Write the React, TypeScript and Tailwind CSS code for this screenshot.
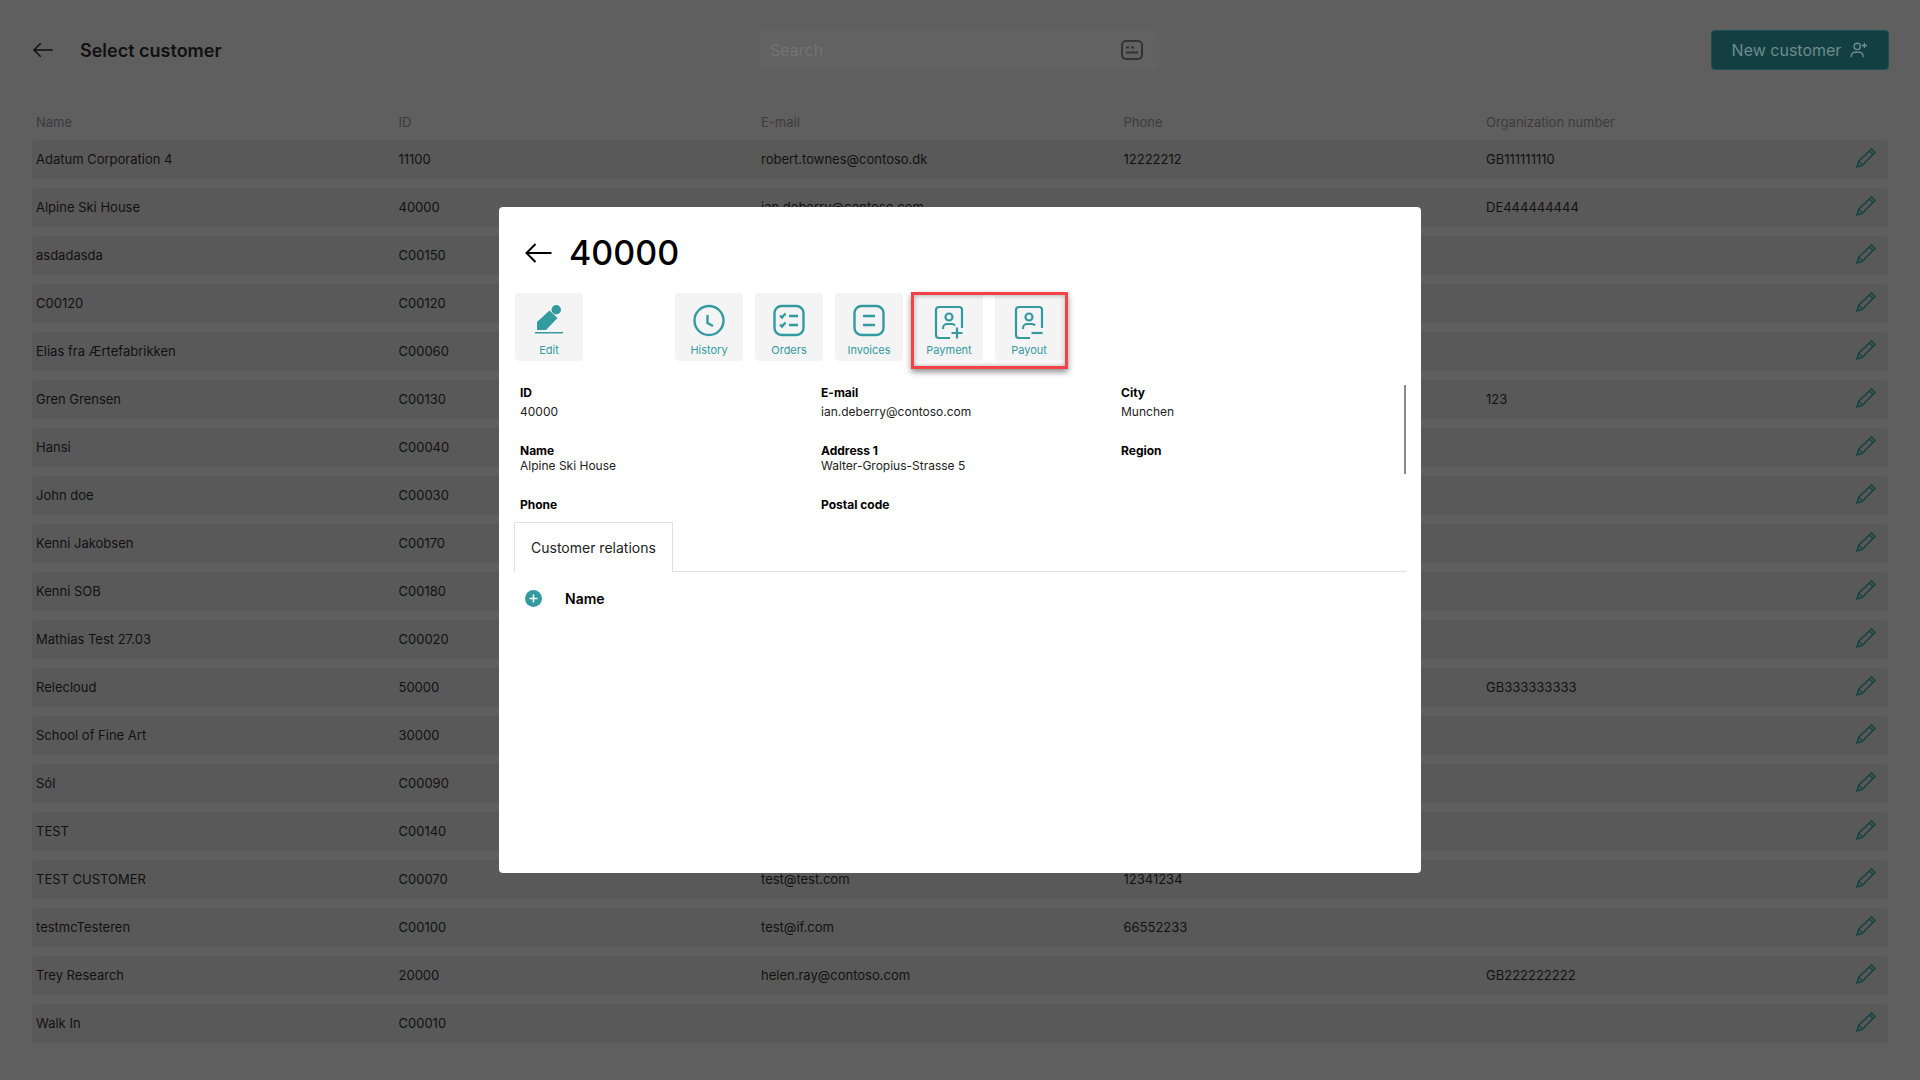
const rows = [
  ['Adatum Corporation 4', '11100', 'robert.townes@contoso.dk', '12222212', 'GB111111110'],
  ['Alpine Ski House', '40000', 'ian.deberry@contoso.com', '', 'DE444444444'],
  ['asdadasda', 'C00150', '', '', ''],
  ['C00120', 'C00120', '', '', ''],
  ['Elias fra Ærtefabrikken', 'C00060', '', '', ''],
  ['Gren Grensen', 'C00130', '', '', '123'],
  ['Hansi', 'C00040', '', '', ''],
  ['John doe', 'C00030', '', '', ''],
  ['Kenni Jakobsen', 'C00170', '', '', ''],
  ['Kenni SOB', 'C00180', '', '', ''],
  ['Mathias Test 27.03', 'C00020', '', '', ''],
  ['Relecloud', '50000', '', '', 'GB333333333'],
  ['School of Fine Art', '30000', '', '', ''],
  ['Sól', 'C00090', '', '', ''],
  ['TEST', 'C00140', '', '', ''],
  ['TEST CUSTOMER', 'C00070', 'test@test.com', '12341234', ''],
  ['testmcTesteren', 'C00100', 'test@if.com', '66552233', ''],
  ['Trey Research', '20000', 'helen.ray@contoso.com', '', 'GB222222222'],
  ['Walk In', 'C00010', '', '', ''],
];

const headers = ['Name', 'ID', 'E-mail', 'Phone', 'Organization number'];

function BackArrow({ className }: { className: string }) {
  return (
    <svg viewBox="0 0 28 24" fill="none" stroke="currentColor" strokeWidth="2" className={className}>
      <path d="M27 12H2M11 3l-9 9 9 9" />
    </svg>
  );
}

function RowPencil() {
  return (
    <svg viewBox="0 0 20 20" fill="none" stroke="#174448" strokeWidth="1.5" className="w-5 h-5">
      <path d="M1 19l1.5-5.500L15.500 1 19 4.500 6.500 17z" />
      <path d="M2.500 13.500l4 3.500M13.500 3l3.500 3.500" />
    </svg>
  );
}

function ActionIcon({ name }: { name: string }) {
  if (name === 'Edit') {
    return (
      <svg viewBox="0 0 32 32" fill="#339aa0" className="w-8 h-8">
        <path d="M4 26v-8L16.500 6.500 24.500 14 13 26z" />
        <rect x="18.500" y="1" width="9.500" height="9.500" rx="4.750" />
        <rect x="2" y="28" width="28" height="1.500" />
      </svg>
    );
  }
  if (name === 'History') {
    return (
      <svg viewBox="0 0 32 32" fill="none" stroke="#339aa0" strokeWidth="2.400" className="w-8 h-8 overflow-visible">
        <circle cx="16" cy="16.500" r="14.500" />
        <path d="M14.500 11v8l5.500 3" />
      </svg>
    );
  }
  if (name === 'Orders') {
    return (
      <svg viewBox="0 0 32 32" fill="none" stroke="#339aa0" strokeWidth="2.400" className="w-8 h-8 overflow-visible">
        <rect x="1.500" y="2" width="29" height="29" rx="7" />
        <path d="M7 11.500l2 2 3.500-4M7 20.500l2 2 3.500-4M16 12h9M16 21h9" />
      </svg>
    );
  }
  if (name === 'Invoices') {
    return (
      <svg viewBox="0 0 32 32" fill="none" stroke="#339aa0" strokeWidth="2.400" className="w-8 h-8 overflow-visible">
        <rect x="1.500" y="2" width="29" height="29" rx="7" />
        <path d="M10 12h12M10 21h12" />
      </svg>
    );
  }
  return (
    <svg viewBox="0 0 32 32" fill="none" stroke="#339aa0" strokeWidth="2.200" className="w-8 h-8 overflow-visible">
      <path d="M17 34H6a3 3 0 0 1-3-3V6a3 3 0 0 1 3-3h20a3 3 0 0 1 3 3v18" />
      <circle cx="16" cy="13" r="3.500" />
      <path d="M10 25v-1a4 4 0 0 1 4-4h5a4 4 0 0 1 3 1.500" />
      {name === 'Payment' ? <path d="M18.500 29h11M24 23.500v11" /> : <path d="M18.500 29h11" />}
    </svg>
  );
}

function ActionButton({ name }: { name: string }) {
  return (
    <div className="w-[68px] h-[68px] rounded bg-[#f4f4f4] flex flex-col items-center pt-[11px]">
      <ActionIcon name={name} />
      <span className="mt-[7px] text-[11px] leading-[14px] text-[#339aa0]">{name}</span>
    </div>
  );
}

function Field({ label, value, first }: { label: string; value?: string; first?: boolean }) {
  return (
    <div className={first ? 'h-[58px] text-[12px] leading-[15px]' : 'h-[54px] text-[12px] leading-[15px]'}>
      <div className="font-bold text-black">{label}</div>
      {value && <div className={first ? 'mt-1 text-[#222]' : 'text-[#222]'}>{value}</div>}
    </div>
  );
}

export default function App() {
  return (
    <div className="relative w-[1920px] h-[1080px] overflow-hidden bg-[#5f5f5f] font-['Inter',sans-serif]">
      <div className="px-8 pt-[30px]">
        <div className="flex items-center h-10">
          <div className="flex items-center w-[728px]">
            <BackArrow className="w-[22px] h-[18px] text-[#111]" />
            <h1 className="ml-[26px] text-[18px] font-semibold text-[#111]">Select customer</h1>
          </div>
          <div className="w-[399px] h-10 rounded bg-[#626262] flex items-center pl-[10px] pr-4">
            <span className="text-[16px] text-[#737373]">Search</span>
            <svg viewBox="0 0 22 20" fill="none" stroke="#333" strokeWidth="2" className="ml-auto w-[22px] h-5">
              <rect x="1" y="1" width="20" height="18" rx="4" />
              <path d="M5 7.500h3M10 7.500h3M5 12.500h12" />
            </svg>
          </div>
          <div className="ml-auto -mr-px w-[178px] h-10 rounded border border-[#1d5053] bg-[#133f42] flex items-center justify-center gap-[9px]">
            <span className="text-[16px] text-[#6d8c8e]">New customer</span>
            <svg viewBox="0 0 20 20" fill="none" stroke="#6d8c8e" strokeWidth="1.500" className="w-[18px] h-[18px]">
              <circle cx="8" cy="6" r="3.500" />
              <path d="M1.500 18v-1.500a4 4 0 0 1 4-4h5a4 4 0 0 1 4 4V18M16 2v6M13 5h6" />
            </svg>
          </div>
        </div>

        <div className="flex pl-1 mt-[45px] h-[16px] items-center text-[13px] text-[#3c3c3c]">
          {headers.map((h) => (
            <div key={h} className="w-[362.5px]">{h}</div>
          ))}
        </div>

        <div className="mt-[9px] flex flex-col gap-[9px]">
          {rows.map((row) => (
            <div key={row[0]} className="h-[39px] rounded bg-[#595959] flex items-center pl-1 text-[13px] text-[#111]">
              {row.map((cell, i) => (
                <div key={i} className="w-[362.5px]">{cell}</div>
              ))}
              <div className="ml-auto mr-3 mb-[3px]">
                <RowPencil />
              </div>
            </div>
          ))}
        </div>
      </div>

      <div className="absolute inset-0 flex items-center justify-center">
        <div className="w-[922px] h-[666px] rounded bg-white px-[15px] relative">
          <div className="flex items-center h-[86px] pt-[5px] pl-[10px]">
            <BackArrow className="w-[29px] h-6 text-black" />
            <span className="ml-[16px] text-[34px] font-medium text-black">40000</span>
          </div>

          <div className="flex gap-3 relative ml-px">
            <ActionButton name="Edit" />
            <div className="w-[68px]" />
            <ActionButton name="History" />
            <ActionButton name="Orders" />
            <ActionButton name="Invoices" />
            <ActionButton name="Payment" />
            <ActionButton name="Payout" />
            <div className="absolute left-[396px] -top-[1px] w-[157px] h-[77px] border-[3px] border-[#f44047] shadow-[0_3px_6px_rgba(0,0,0,0.45),inset_0_0_5px_rgba(0,0,0,0.35)]" />
          </div>

          <div className="relative mt-[24px] h-[137px] overflow-hidden pl-[6px] grid grid-cols-[301px_300px_1fr] content-start">
            <div className="absolute right-0 -top-px w-[2px] h-[90px] bg-[#8a8a8a]" />
            <Field label="ID" value="40000" first />
            <Field label="E-mail" value="ian.deberry@contoso.com" first />
            <Field label="City" value="Munchen" first />
            <Field label="Name" value="Alpine Ski House" />
            <Field label="Address 1" value="Walter-Gropius-Strasse 5" />
            <Field label="Region" />
            <Field label="Phone" />
            <Field label="Postal code" />
          </div>

          <div className="flex h-[50px] border-b border-[#e0e0e0]">
            <div className="w-[159px] h-[50px] bg-white border border-b-0 border-[#e0e0e0] flex items-center pl-4 text-[14px] text-[#222]">
              Customer relations
            </div>
          </div>

          <div className="flex items-center mt-[16px] pl-[11px]">
            <div className="w-[17px] h-[17px] rounded-full bg-[#339aa0] flex items-center justify-center">
              <svg viewBox="0 0 9 9" stroke="white" strokeWidth="1.500" className="w-[9px] h-[9px]">
                <path d="M0.500 4.500h8M4.500 0.500v8" />
              </svg>
            </div>
            <span className="ml-[23px] text-[14px] font-semibold text-black">Name</span>
          </div>
        </div>
      </div>
    </div>
  );
}
